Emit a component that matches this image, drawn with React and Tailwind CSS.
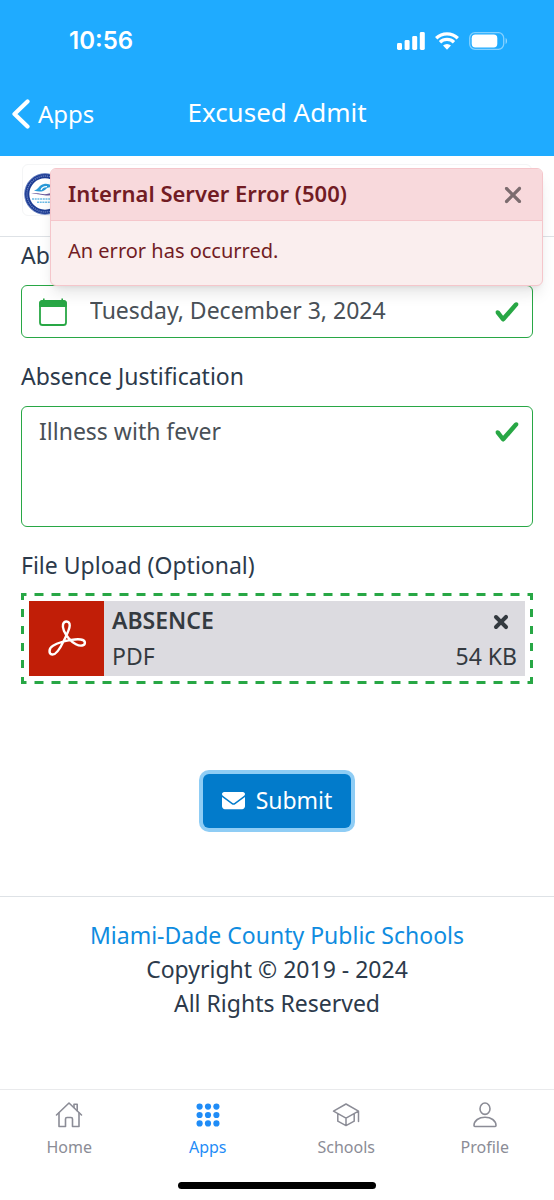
import { FaEnvelope, FaXmark } from "react-icons/fa6";

function SignalIcon() {
  return (
    <svg width="28" height="18" viewBox="0 0 28 18" fill="white" aria-hidden="true">
      <rect x="0" y="11" width="5" height="7" rx="1.4" />
      <rect x="7.6" y="8" width="5" height="10" rx="1.4" />
      <rect x="15.2" y="4" width="5" height="14" rx="1.4" />
      <rect x="22.8" y="0" width="5" height="18" rx="1.4" />
    </svg>
  );
}

function WifiIcon() {
  return (
    <svg width="24" height="18" viewBox="0 0 24 18" aria-hidden="true">
      <g fill="none" stroke="white" strokeWidth="3.3">
        <path d="M1.2 6.2A15.4 15.4 0 0 1 22.8 6.2" />
        <path d="M5 10.3A10 10 0 0 1 19 10.3" />
      </g>
      <path d="M12 17.8 8 13.6a5.8 5.8 0 0 1 8 0Z" fill="white" />
    </svg>
  );
}

function BatteryIcon() {
  return (
    <svg width="39" height="18" viewBox="0 0 39 18" aria-hidden="true">
      <rect x="0.7" y="0.7" width="34" height="16.6" rx="5.2" fill="none" stroke="white" strokeOpacity="0.45" strokeWidth="1.3" />
      <rect x="2.7" y="2.6" width="25.6" height="12.8" rx="3.6" fill="white" />
      <path d="M36.6 6v6c1.9-.6 1.9-5.4 0-6Z" fill="white" fillOpacity="0.5" />
    </svg>
  );
}

function SchoolSeal() {
  return (
    <svg width="42" height="42" viewBox="0 0 42 42" className="shrink-0" role="img" aria-label="District seal">
      <circle cx="21" cy="21" r="18" fill="white" stroke="#1d3c93" strokeWidth="4.6" />
      <circle cx="21" cy="21" r="18" fill="none" stroke="#7289c6" strokeWidth="1.4" strokeDasharray="1.1 1" />
      <circle cx="21" cy="21" r="20.4" fill="none" stroke="#5c76bb" strokeWidth="0.8" />
      <path d="M10 17.500c4-.5 5-5.500 10-6.500s9 2 12 5c-6-2.500-8-2-10.500.5-2 2-6 3-11.500 1Z" fill="#2a9ad8" />
      <path d="M17 17c1-2.500 3-3.500 6-3.300" fill="none" stroke="white" strokeWidth="1.2" />
      <path d="M7 21c7-2 12 1.500 18-.5 4-1.200 7-.8 10 .5-5 .2-8 2-13 1.400-5-.8-9-1.600-15-1.400Z" fill="#6b5b9d" />
      <path d="M8 26h26M13 29.300h16" stroke="#6bbbe6" strokeWidth="1.4" strokeDasharray="2 .7" />
    </svg>
  );
}

function CalendarIcon() {
  return (
    <svg width="30" height="30" viewBox="0 0 30 30" className="shrink-0" aria-hidden="true">
      <rect x="2" y="4" width="26" height="24" rx="2.6" fill="none" stroke="#28a745" strokeWidth="1.8" />
      <path d="M1.2 10V6.200a3 3 0 0 1 3-3h.8V1.500h1.600v1.700h16.800V1.500H25v1.700h.8a3 3 0 0 1 3 3V10Z" fill="#28a745" />
    </svg>
  );
}

function ValidIcon() {
  return (
    <svg width="26" height="26" viewBox="0 0 8 8" fill="#28a745" aria-hidden="true">
      <path d="M2.300 6.730.6 4.530c-.4-1.040.46-1.400 1.100-.8l1.100 1.400 3.400-3.800c.6-.63 1.600-.27 1.200.7l-4 4.600c-.43.5-.8.4-1.100.1Z" />
    </svg>
  );
}

function AcrobatIcon() {
  return (
    <svg width="40" height="40" viewBox="0 0 40 40" fill="none" stroke="white" strokeWidth="2.400" strokeLinejoin="round" strokeLinecap="round" aria-hidden="true">
      <path d="M19.500 2.500c-3.800 0-4.600 4.600-2.600 9.200 2.700 5.900 6.700 10.600 12 13.500 4.500 2.400 9 1.700 9-1.500 0-3.700-6.400-4-13.600-2.800-6.300 1-13.600 3.100-18.300 5.800-4.700 2.700-4.300 8.300-.8 8.800 4.500.6 8.500-7.300 11.600-13.800 2.900-6 5.900-11.200 5.900-15.200 0-2.500-1.200-4-3.200-4Z" />
    </svg>
  );
}

function HomeIcon() {
  return (
    <svg width="28" height="28" viewBox="0 0 28 28" fill="none" stroke="currentColor" strokeWidth="1.600" strokeLinejoin="round" strokeLinecap="round" aria-hidden="true">
      <path d="M1.500 14 14 2l12.500 12" />
      <path d="M4 12v13.500h6.500V18a1.500 1.500 0 0 1 1.500-1.500h4a1.500 1.500 0 0 1 1.500 1.500v7.500H24V12" />
      <path d="M19 6.500V3.200h3.200v6.500" />
    </svg>
  );
}

function AppsIcon() {
  const spots = [5.6, 14, 22.4];
  return (
    <svg width="28" height="28" viewBox="0 0 28 28" fill="currentColor" aria-hidden="true">
      {spots.map((y) => spots.map((x) => <circle key={x + "-" + y} cx={x} cy={y} r="3.100" />))}
    </svg>
  );
}

function SchoolIcon() {
  return (
    <svg width="28" height="28" viewBox="0 0 28 28" fill="none" stroke="currentColor" strokeWidth="1.500" strokeLinejoin="round" strokeLinecap="round" aria-hidden="true">
      <path d="M14 3 1.500 10.200 14 17.200l12.500-7ZM5.800 12.800v7.400L14 24.600l8.200-4.400v-7.400M14 17.200v7.400M26.500 10.200v10.300" />
    </svg>
  );
}

function ProfileIcon() {
  return (
    <svg width="28" height="28" viewBox="0 0 28 28" fill="none" stroke="currentColor" strokeWidth="1.600" strokeLinejoin="round" aria-hidden="true">
      <ellipse cx="14" cy="7.700" rx="5" ry="5.700" />
      <path d="M3 24.600c0-5.200 5-8.300 11-8.300s11 3.100 11 8.300c0 .6-.3.900-.9.900H3.900c-.6 0-.9-.3-.9-.9Z" />
    </svg>
  );
}

const tabs = [
  { label: "Home", Icon: HomeIcon },
  { label: "Apps", Icon: AppsIcon, active: true },
  { label: "Schools", Icon: SchoolIcon },
  { label: "Profile", Icon: ProfileIcon },
];

function ErrorToast() {
  return (
    <div role="alert" className="absolute top-3 right-[11px] left-[50px] overflow-hidden rounded-md border border-[#f5c6cb] bg-[#faeeee] text-[#721c24] shadow-lg">
      <div className="flex h-13 items-center justify-between border-b border-[#f5c6cb] bg-[#f8d9dc] pr-4 pl-[17px]">
        <strong className="pb-1 text-[22px] leading-8 font-semibold">Internal Server Error (500)</strong>
        <button type="button" aria-label="Close" className="text-[#7c6c6f]">
          <FaXmark size={26} />
        </button>
      </div>
      <p className="px-[17px] pt-3.5 pb-[18px] text-[20px] leading-8">An error has occurred.</p>
    </div>
  );
}

export default function App() {
  return (
    <div className="flex min-h-screen flex-col bg-white font-['Noto_Sans',sans-serif] text-[#2c3a4b]">
      <header className="bg-[#1fabff] text-white">
        <div className="flex h-[82px] items-center justify-between pr-[46px] pl-[69px]">
          <time className="font-['Inter',sans-serif] text-[24px] font-semibold">10:56</time>
          <div className="flex items-center gap-2.5">
            <SignalIcon />
            <WifiIcon />
            <BatteryIcon />
          </div>
        </div>
        <div className="grid h-[74px] grid-cols-[1fr_auto_1fr] items-start pt-3.5 leading-9">
          <a href="#apps" className="flex items-center gap-2 pl-3 text-[24px]">
            <svg width="18" height="30" viewBox="0 0 18 30" fill="none" stroke="white" strokeWidth="4.200" strokeLinecap="round" strokeLinejoin="round" aria-hidden="true">
              <path d="M15.500 2.500 2.500 15l13 12.500" />
            </svg>
            Apps
          </a>
          <h1 className="text-[26px] leading-8">Excused Admit</h1>
        </div>
      </header>

      <main className="relative flex grow flex-col">
        <div className="border-b border-[#dee2e6] px-[22px] pt-2 pb-5">
          <div className="flex h-13 items-end rounded-md border border-[#f4f5f6] pl-px">
            <SchoolSeal />
          </div>
        </div>

        <form className="flex flex-col px-[21px] text-[23px]" onSubmit={(e) => e.preventDefault()}>
          <label htmlFor="date" className="pt-px pb-[13px] leading-[34px]">
            Absence Date
          </label>
          <div className="flex h-[53px] items-center rounded-md border border-[#28a745] pr-3 pl-4">
            <CalendarIcon />
            <input id="date" type="text" readOnly defaultValue="Tuesday, December 3, 2024" className="ml-[22px] min-w-0 grow pb-0.5 text-[#495057] outline-none" />
            <ValidIcon />
          </div>

          <label htmlFor="reason" className="pt-[21px] pb-[13px] leading-[34px]">
            Absence Justification
          </label>
          <div className="flex h-[121px] rounded-md border border-[#28a745] pr-3 pl-[17px]">
            <textarea id="reason" defaultValue="Illness with fever" className="min-w-0 grow resize-none pt-[7px] leading-[34px] text-[#495057] outline-none" />
            <div className="pt-3">
              <ValidIcon />
            </div>
          </div>

          <span className="pt-[21px] pb-[11px] leading-[34px]">File Upload (Optional)</span>
          <div className="bg-[linear-gradient(90deg,transparent_4px,#28a745_4px_13px,transparent_13px),linear-gradient(90deg,transparent_4px,#28a745_4px_13px,transparent_13px),linear-gradient(#28a745_4px,transparent_4px_13px,#28a745_13px),linear-gradient(#28a745_4px,transparent_4px_13px,#28a745_13px)] bg-[size:17px_3px,17px_3px,3px_17px,3px_17px] bg-[position:center_top,center_bottom,left_center,right_center] [background-repeat:repeat-x,repeat-x,repeat-y,repeat-y] p-2 text-[#343a40]">
            <div className="flex">
              <div className="flex size-[75px] shrink-0 items-center justify-center bg-[#c11e07]">
                <AcrobatIcon />
              </div>
              <div className="flex grow flex-col justify-between bg-[#dcdbe0] px-2 pt-0.5 pb-[3px] leading-[34px]">
                <div className="flex items-center justify-between">
                  <span className="font-semibold">ABSENCE</span>
                  <button type="button" aria-label="Remove file" className="mr-1.5 pt-1">
                    <FaXmark size={20} strokeWidth={40} stroke="currentColor" />
                  </button>
                </div>
                <div className="flex justify-between">
                  <span>PDF</span>
                  <span>54 KB</span>
                </div>
              </div>
            </div>
          </div>

          <button type="submit" className="mt-[90px] mb-[68px] flex h-[54px] items-center gap-[11px] self-center rounded-md bg-[#027bcb] px-[19px] pb-0.5 text-white ring-4 ring-[#8fcdf5]">
            <FaEnvelope size={23} />
            Submit
          </button>
        </form>

        <footer className="border-t border-[#dee2e6] pt-[21px] text-center text-[23px] leading-[34px]">
          <a href="#district" className="text-[#0f8ce0]">
            Miami-Dade County Public Schools
          </a>
          <p>Copyright © 2019 - 2024</p>
          <p>All Rights Reserved</p>
        </footer>

        <ErrorToast />
      </main>

      <nav className="border-t border-[#e9eaec]">
        <div className="grid h-[92px] grid-cols-4 items-start pt-[11px] text-[16px]">
          {tabs.map(({ label, Icon, active }) => (
            <a key={label} href={"#" + label.toLowerCase()} className={active ? "flex flex-col items-center gap-1.5 text-[#1f8cf7]" : "flex flex-col items-center gap-1.5 text-[#8b8c96]"}>
              <Icon />
              {label}
            </a>
          ))}
        </div>
        <div className="mx-auto mb-[11px] h-[7px] w-[198px] rounded-full bg-black" />
      </nav>
    </div>
  );
}
